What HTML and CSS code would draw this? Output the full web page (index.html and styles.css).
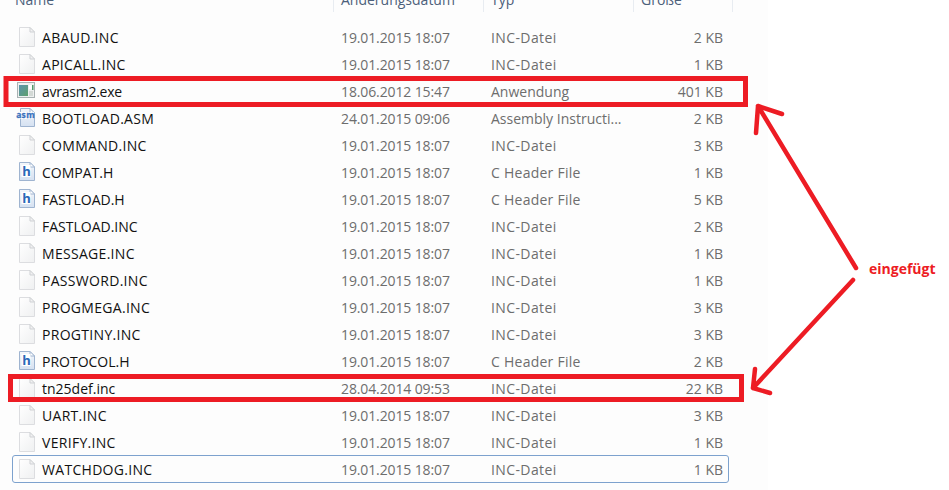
FILE: index.html
```html
<!DOCTYPE html>
<html lang="de">
<head>
<meta charset="utf-8">
<title>Dateiliste</title>
<link rel="stylesheet" href="styles.css">
</head>
<body>
<main class="explorer">
  <div class="head">
    <span class="hname">Name</span><span class="hcell">Änderungsdatum</span><span class="hcell">Typ</span><span class="hcell">Größe</span>
  </div>
  <div class="list">
    <div class="row"><span class="name"><svg class="ico"><use href="#doc"/></svg>ABAUD.INC</span><span class="cell date">19.01.2015 18:07</span><span class="cell inc">INC-Datei</span><span class="size">2 KB</span></div>
    <div class="row"><span class="name"><svg class="ico"><use href="#doc"/></svg>APICALL.INC</span><span class="cell date">19.01.2015 18:07</span><span class="cell inc">INC-Datei</span><span class="size">1 KB</span></div>
    <div class="row"><span class="name tight"><svg class="ico"><use href="#exe"/></svg>avrasm2.exe</span><span class="cell date">18.06.2012 15:47</span><span class="cell">Anwendung</span><span class="size">401 KB</span></div>
    <div class="row"><span class="name"><svg class="ico"><use href="#asm"/></svg>BOOTLOAD.ASM</span><span class="cell date">24.01.2015 09:06</span><span class="cell">Assembly Instructi...</span><span class="size">2 KB</span></div>
    <div class="row"><span class="name"><svg class="ico"><use href="#doc"/></svg>COMMAND.INC</span><span class="cell date">19.01.2015 18:07</span><span class="cell inc">INC-Datei</span><span class="size">3 KB</span></div>
    <div class="row"><span class="name plain"><svg class="ico"><use href="#hdr"/></svg>COMPAT.H</span><span class="cell date">19.01.2015 18:07</span><span class="cell chdr">C Header File</span><span class="size">1 KB</span></div>
    <div class="row"><span class="name plain"><svg class="ico"><use href="#hdr"/></svg>FASTLOAD.H</span><span class="cell date">19.01.2015 18:07</span><span class="cell chdr">C Header File</span><span class="size">5 KB</span></div>
    <div class="row"><span class="name plain"><svg class="ico"><use href="#doc"/></svg>FASTLOAD.INC</span><span class="cell date">19.01.2015 18:07</span><span class="cell inc">INC-Datei</span><span class="size">2 KB</span></div>
    <div class="row"><span class="name"><svg class="ico"><use href="#doc"/></svg>MESSAGE.INC</span><span class="cell date">19.01.2015 18:07</span><span class="cell inc">INC-Datei</span><span class="size">1 KB</span></div>
    <div class="row"><span class="name"><svg class="ico"><use href="#doc"/></svg>PASSWORD.INC</span><span class="cell date">19.01.2015 18:07</span><span class="cell inc">INC-Datei</span><span class="size">1 KB</span></div>
    <div class="row"><span class="name"><svg class="ico"><use href="#doc"/></svg>PROGMEGA.INC</span><span class="cell date">19.01.2015 18:07</span><span class="cell inc">INC-Datei</span><span class="size">3 KB</span></div>
    <div class="row"><span class="name"><svg class="ico"><use href="#doc"/></svg>PROGTINY.INC</span><span class="cell date">19.01.2015 18:07</span><span class="cell inc">INC-Datei</span><span class="size">3 KB</span></div>
    <div class="row"><span class="name plain"><svg class="ico"><use href="#hdr"/></svg>PROTOCOL.H</span><span class="cell date">19.01.2015 18:07</span><span class="cell chdr">C Header File</span><span class="size">2 KB</span></div>
    <div class="row"><span class="name plain"><svg class="ico"><use href="#doc"/></svg>tn25def.inc</span><span class="cell date">28.04.2014 09:53</span><span class="cell inc">INC-Datei</span><span class="size">22 KB</span></div>
    <div class="row"><span class="name"><svg class="ico"><use href="#doc"/></svg>UART.INC</span><span class="cell date">19.01.2015 18:07</span><span class="cell inc">INC-Datei</span><span class="size">3 KB</span></div>
    <div class="row"><span class="name"><svg class="ico"><use href="#doc"/></svg>VERIFY.INC</span><span class="cell date">19.01.2015 18:07</span><span class="cell inc">INC-Datei</span><span class="size">1 KB</span></div>
    <div class="row selected"><span class="name"><svg class="ico"><use href="#doc"/></svg>WATCHDOG.INC</span><span class="cell date">19.01.2015 18:07</span><span class="cell inc">INC-Datei</span><span class="size">1 KB</span></div>
  </div>
</main>

<svg class="markup" width="949" height="490" viewBox="0 0 949 490" aria-hidden="true">
  <rect class="mark" x="6" y="78.500" width="739.500" height="26"/>
  <rect class="mark" x="10.500" y="376.500" width="731" height="23"/>
  <g class="arrow">
    <path d="M856 268 L758 106 M758 106 L782 114 M758 106 L756 133"/>
    <path d="M853 280 L753 388 M755 369 L753 388 L770 393"/>
  </g>
</svg>
<span class="note">eingefügt</span>

<svg class="defs" width="0" height="0" aria-hidden="true">
  <defs>
    <linearGradient id="paper" x1="0" y1="0" x2="1" y2="1"><stop offset="0" stop-color="#ffffff"/><stop offset="1" stop-color="#eff0f1"/></linearGradient>
    <linearGradient id="hpaper" x1="0" y1="0" x2="0" y2="1"><stop offset="0" stop-color="#f4f7fb"/><stop offset="1" stop-color="#d5e1f1"/></linearGradient>
    <linearGradient id="screen" x1="0" y1="0" x2="1" y2="1"><stop offset="0" stop-color="#5a93ad"/><stop offset="1" stop-color="#5fa06e"/></linearGradient>
    <symbol id="doc" viewBox="0 0 20 21">
      <path d="M3.500 0.500H14L18.500 5V19.500H3.500Z" fill="url(#paper)" stroke="#dcdde0"/>
      <path d="M14 0.500V5H18.500Z" fill="#f2f2f3" stroke="#cfd1d4"/>
    </symbol>
    <symbol id="hdr" viewBox="0 0 20 21">
      <path d="M3.500 0.500H14L18.500 5V18.500H3.500Z" fill="url(#hpaper)" stroke="#9fb4d0"/>
      <path d="M14 0.500V5H18.500Z" fill="#fff" stroke="#9fb4d0"/>
      <rect x="5.500" y="3" width="9" height="12" fill="#fff"/>
      <text x="10.500" y="14" class="glyph-h">h</text>
    </symbol>
    <symbol id="asm" viewBox="0 0 20 21">
      <path d="M4.500 0.500H14L18.500 5V18.500H4.500Z" fill="url(#hpaper)" stroke="#9fb4d0"/>
      <path d="M14 0.500V5H18.500Z" fill="#fff" stroke="#9fb4d0"/>
      <rect x="1" y="4" width="17" height="7" fill="#fff"/>
      <text x="9.500" y="10" class="glyph-asm">asm</text>
    </symbol>
    <symbol id="exe" viewBox="0 0 20 21">
      <rect x="1.500" y="1.500" width="17" height="15" fill="#eef0f0" stroke="#a9b1b2"/>
      <rect x="3" y="4" width="9" height="11" fill="url(#screen)"/>
      <rect x="13" y="4" width="4" height="4" fill="#fff"/>
      <rect x="16" y="4" width="1.500" height="5" fill="#4f9a6a"/>
      <rect x="13" y="10" width="4" height="5" fill="#d3d9d6"/>
    </symbol>
  </defs>
</svg>
</body>
</html>
```
FILE: styles.css
```css
html, body {
  margin: 0;
  padding: 0;
  background: #fff;
}
body {
  width: 949px;
  height: 490px;
  overflow: hidden;
  position: relative;
  font-family: "Open Sans", "Noto Sans", sans-serif;
  font-size: 14px;
}
.explorer {
  width: 768px;
  height: 490px;
  background: #fdfdfd;
  overflow: hidden;
}
.head {
  display: grid;
  grid-template-columns: 333px 150px 150px 100px;
  height: 12px;
  color: #4c607a;
}
.hname, .hcell {
  line-height: 18px;
  height: 12px;
  overflow: visible;
}
.hname {
  padding-left: 15px;
  transform: translateY(-9px);
}
.hcell {
  padding-left: 8px;
  box-shadow: inset 1px 0 0 #e8ecf1;
  line-height: 0;
}
.hcell:last-child { box-shadow: inset 1px 0 0 #e8ecf1, inset -1px 0 0 #e8ecf1; }
.list {
  margin: 12px 0 0 12px;
  width: 717px;
}
.row {
  display: grid;
  grid-template-columns: 321px 150px 150px 96px;
  height: 27px;
  line-height: 27px;
  align-items: center;
  box-sizing: border-box;
  color: #6d6d6d;
}
.selected {
  border: 1px solid #7da2ce;
  border-radius: 3px;
  height: 28px;
  margin-top: -1px;
  grid-template-columns: 320px 150px 150px 95px;
}
.name {
  display: flex;
  align-items: center;
  color: #111;
  padding-left: 4px;
  letter-spacing: 0.3px;
}
.plain { letter-spacing: 0; }
.tight { letter-spacing: -0.25px; }
.selected .name { padding-left: 3px; }
.ico {
  width: 20px;
  height: 21px;
  margin-right: 6px;
  flex: none;
}
.cell { padding-left: 8px; white-space: nowrap; }
.date { letter-spacing: -0.12px; }
.inc { letter-spacing: 0.4px; }
.chdr { letter-spacing: 0.25px; }
.size { text-align: right; padding-right: 6px; }
.selected .size { padding-right: 5px; }
.markup {
  position: absolute;
  left: 0;
  top: 0;
}
.mark {
  fill: none;
  stroke: #ed1c24;
  stroke-width: 5;
}
.arrow path {
  fill: none;
  stroke: #ed1c24;
  stroke-width: 4.500;
  stroke-linecap: round;
  stroke-linejoin: round;
}
.note {
  position: absolute;
  left: 869px;
  top: 260px;
  color: #ed1c24;
  font-weight: 700;
  font-size: 14px;
  line-height: 18px;
}
.defs { position: absolute; }
.glyph-h {
  font: 700 13px "Open Sans", sans-serif;
  fill: #2a68b8;
  text-anchor: middle;
}
.glyph-asm {
  font: 700 8.500px "Open Sans", sans-serif;
  fill: #3a72bd;
  stroke: #3a72bd;
  stroke-width: 0.300;
  text-anchor: middle;
}
```
